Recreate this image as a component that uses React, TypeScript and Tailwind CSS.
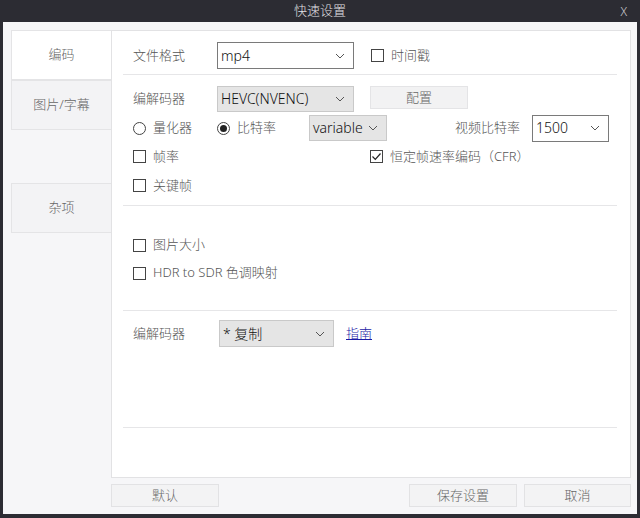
import React from 'react';

const font = { fontFamily: "'Noto Sans', 'Noto Sans CJK SC', sans-serif" };

function Chevron() {
  return (
    <svg width="10" height="6" viewBox="0 0 10 6" className="shrink-0">
      <polyline points="1,1 5,5 9,1" fill="none" stroke="#555" strokeWidth="1" />
    </svg>
  );
}

function Select({ value, width, gray, height = 27 }: { value: string; width: number; gray?: boolean; height?: number }) {
  return (
    <div
      className={`flex items-center justify-between pl-[3px] pr-[8px] border text-[14px] text-[#111] ${
        gray ? 'bg-[#e5e5e5] border-[#c9c9c9]' : 'bg-white border-[#7a7a7a]'
      }`}
      style={{ width, height }}
    >
      <span className="leading-none">{value}</span>
      <Chevron />
    </div>
  );
}

function Checkbox({ label, checked }: { label: string; checked?: boolean }) {
  return (
    <div className="flex items-center gap-[7px]">
      <div className="w-[13px] h-[13px] border border-[#444] bg-white flex items-center justify-center">
        {checked && (
          <svg width="11" height="11" viewBox="0 0 11 11">
            <polyline points="1.5,5.5 4.3,8.3 9.5,2.5" fill="none" stroke="#222" strokeWidth="1.2" />
          </svg>
        )}
      </div>
      <span>{label}</span>
    </div>
  );
}

function Radio({ label, checked }: { label: string; checked?: boolean }) {
  return (
    <div className="flex items-center gap-[7px]">
      <div className="w-[13px] h-[13px] rounded-full border border-[#444] bg-white flex items-center justify-center">
        {checked && <div className="w-[7px] h-[7px] rounded-full bg-[#222]" />}
      </div>
      <span>{label}</span>
    </div>
  );
}

function Divider({ mt }: { mt: string }) {
  return <div className={`${mt} h-px bg-[#e6e6e8] ml-[11px] mr-[13px]`} />;
}

function Tab({ label, active }: { label: string; active?: boolean }) {
  return (
    <div
      className={`h-[50px] flex items-center justify-center border-l border-b border-t border-[#e4e4e6] text-[13px] text-[#666] ${
        active ? 'bg-white' : 'bg-[#f3f3f5]'
      }`}
    >
      {label}
    </div>
  );
}

function Button({ label, width }: { label: string; width: number }) {
  return (
    <div
      className="h-[23px] flex items-center justify-center bg-[#f3f3f4] border border-[#e2e2e4] text-[13px] text-[#666]"
      style={{ width }}
    >
      {label}
    </div>
  );
}

export default function App() {
  return (
    <div className="w-[640px] h-[518px] bg-[#2c2c33] flex flex-col px-[3px] pb-[4px] font-light" style={font}>
      {/* title bar */}
      <div className="h-[22px] flex items-center justify-center relative text-[13px] text-[#e2e2e6]">
        快速设置
        <span className="absolute right-[10px] top-[3px] text-[12px] text-[#cfcfd4]">X</span>
      </div>

      <div className="flex-1 bg-[#f6f6f8] flex flex-col pt-[8px] pl-[8px] pr-[6px]">
        <div className="flex h-[448px]">
          {/* tabs */}
          <div className="w-[100px] flex flex-col">
            <Tab label="编码" active />
            <Tab label="图片/字幕" />
            <div className="h-[53px]" />
            <Tab label="杂项" />
          </div>

          {/* panel */}
          <div className="flex-1 bg-white border border-[#e2e2e4] flex flex-col text-[13px] text-[#555]">
            <div className="mt-[11px] h-[27px] flex items-center pl-[21px]">
              <div className="w-[84px]">文件格式</div>
              <Select value="mp4" width={137} />
              <div className="ml-[17px]">
                <Checkbox label="时间戳" />
              </div>
            </div>
            <Divider mt="mt-[5px]" />

            <div className="mt-[11px] h-[26px] flex items-center pl-[21px]">
              <div className="w-[84px]">编解码器</div>
              <Select value="HEVC(NVENC)" width={137} gray height={26} />
              <div className="ml-[16px] self-start w-[98px] h-[23px] bg-[#f2f2f3] border border-[#e4e4e6] flex items-center justify-center text-[#666]">
                配置
              </div>
            </div>

            <div className="mt-[2px] h-[28px] flex items-center pl-[21px] pr-[21px]">
              <div className="w-[84px]">
                <Radio label="量化器" />
              </div>
              <div className="w-[92px]">
                <Radio label="比特率" checked />
              </div>
              <Select value="variable" width={78} gray height={26} />
              <div className="flex-1 flex items-center justify-end">
                <span className="mr-[12px]">视频比特率</span>
                <Select value="1500" width={77} />
              </div>
            </div>

            <div className="h-[29px] flex items-center pl-[21px]">
              <div className="w-[237px]">
                <Checkbox label="帧率" />
              </div>
              <Checkbox label="恒定帧速率编码（CFR）" checked />
            </div>
            <div className="h-[29px] flex items-center pl-[21px]">
              <Checkbox label="关键帧" />
            </div>
            <Divider mt="mt-[5px]" />

            <div className="mt-[25px] h-[28px] flex items-center pl-[21px]">
              <Checkbox label="图片大小" />
            </div>
            <div className="h-[28px] flex items-center pl-[21px]">
              <Checkbox label="HDR to SDR 色调映射" />
            </div>
            <Divider mt="mt-[23px]" />

            <div className="mt-[9px] h-[27px] flex items-center pl-[21px]">
              <div className="w-[86px]">编解码器</div>
              <Select value="* 复制" width={115} gray />
              <a className="ml-[12px] text-[#1a1aa6] underline">指南</a>
            </div>
            <Divider mt="mt-[80px]" />
          </div>
        </div>

        {/* bottom buttons */}
        <div className="mt-[6px] flex items-center pl-[100px]">
          <Button label="默认" width={108} />
          <div className="flex-1" />
          <Button label="保存设置" width={108} />
          <div className="w-[7px]" />
          <Button label="取消" width={107} />
        </div>
      </div>
    </div>
  );
}
